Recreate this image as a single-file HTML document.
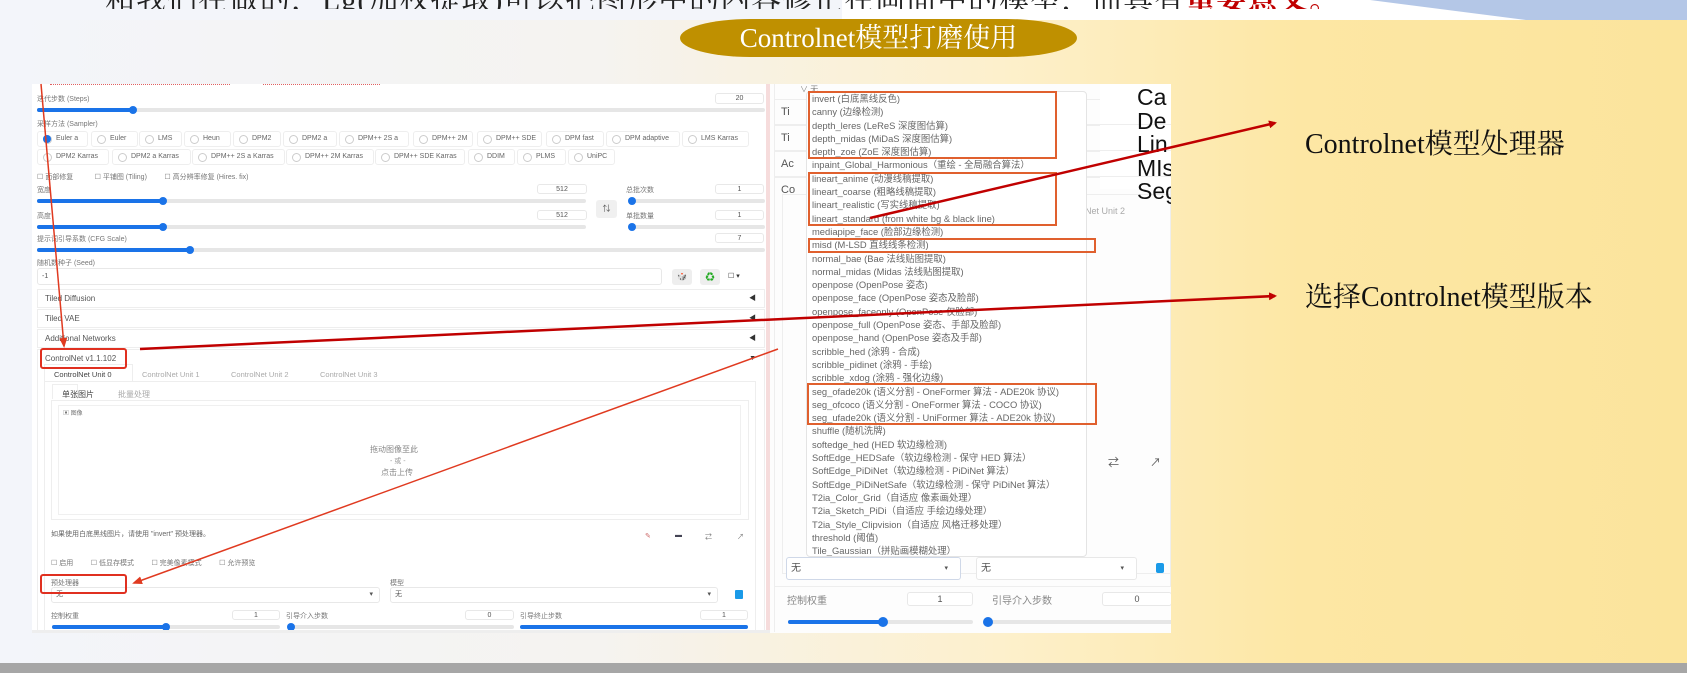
<!DOCTYPE html>
<html><head><meta charset="utf-8"><style>
*{margin:0;padding:0;box-sizing:border-box}
body{width:1687px;height:673px;overflow:hidden;position:relative;font-family:"Liberation Sans","Noto Sans CJK SC",sans-serif;background:linear-gradient(90deg,#f3f5fa 0px,#f5f3f0 600px,#fdf0cc 1000px,#fde7a4 1300px,#fbe49c 1687px)}
.a{position:absolute}
.t{position:absolute;font-size:7px;color:#777;white-space:nowrap}
.inp{position:absolute;border:1px solid #e8e8e8;border-radius:3px;background:#fff;font-size:7px;color:#555;text-align:center;line-height:9px}
.trk{position:absolute;height:4px;background:#e6e6e6;border-radius:2px}
.fill{position:absolute;height:4px;background:#1a73e8;border-radius:2px}
.th{position:absolute;width:8px;height:8px;border-radius:50%;background:#1a73e8}
.rad{position:absolute;height:16px;border:1px solid #eee;border-radius:3px;font-size:7px;color:#666;line-height:14px;padding-left:18px;background:#fff}
.rad:before{content:"";position:absolute;left:5px;top:3px;width:7px;height:7px;border:1px solid #ccc;border-radius:50%}
.acc{position:absolute;left:37px;width:728px;height:19px;border:1px solid #eee;background:#fff;font-size:8px;color:#555;line-height:18px;padding-left:7px}
.acc span{position:absolute;right:8px;font-size:7px;color:#333}
.dd div{height:13.3px;line-height:13.3px;font-size:9.4px;color:#666;padding-left:5px;white-space:nowrap}
.rb{position:absolute;border:2.5px solid #e0602e}
</style></head><body>
<!-- top band -->
<div class="a" style="left:0;top:0;width:1687px;height:20px;background:#fff"></div>
<div class="a" style="left:0;top:0;width:842px;height:20px;background:#f3f5fa"></div>
<svg class="a" style="left:0;top:0" width="1687" height="22"><polygon points="1370,0 1687,0 1687,20 1526,20" fill="#b4c7e7"/></svg>
<div class="a" style="left:0;top:0;width:1687px;height:9px;overflow:hidden">
<div class="a" style="left:105px;top:-25px;font-size:30px;color:#222;white-space:nowrap;font-family:'Liberation Serif','Noto Serif CJK SC',serif;letter-spacing:1px">和我们在做的，Lg(加权提取)可以把图形中的内容修正在画面中的模型，而具有<span style="color:#c00000;font-weight:bold">重要意义。</span></div>
</div>
<!-- title pill -->
<div class="a" style="left:680px;top:19px;width:397px;height:38px;border-radius:70px/19px;background:#bf9000;color:#fff;font-family:'Liberation Serif','Noto Serif CJK SC',serif;font-size:27px;text-align:center;line-height:38px">Controlnet模型打磨使用</div>
<!-- bottom band -->
<div class="a" style="left:0;top:663px;width:1687px;height:10px;background:#a6a6a6"></div>

<!-- left screenshot -->
<div class="a" style="left:32px;top:84px;width:738px;height:549px;background:#fff;overflow:hidden"></div>
<div class="a" style="left:766px;top:84px;width:4px;height:549px;background:#f6dcdc"></div>
<div class="a" style="left:50px;top:84px;width:180px;border-top:1px dotted #e06060"></div>
<div class="a" style="left:263px;top:84px;width:117px;border-top:1px dotted #e06060"></div>
<div class="t" style="left:37px;top:94px">迭代步数 (Steps)</div>
<div class="inp" style="left:715px;top:93px;width:49px;height:11px">20</div>
<div class="trk" style="left:37px;top:108px;width:728px"></div><div class="fill" style="left:37px;top:108px;width:96px"></div><div class="th" style="left:129px;top:106px"></div>
<div class="t" style="left:37px;top:119px">采样方法 (Sampler)</div>
<div class="rad" style="left:37px;top:131px;width:51px">Euler a</div>
<div class="a" style="left:43px;top:135px;width:8px;height:8px;border-radius:50%;background:#1a73e8"></div>
<div class="rad" style="left:91px;top:131px;width:47px">Euler</div>
<div class="rad" style="left:139px;top:131px;width:43px">LMS</div>
<div class="rad" style="left:184px;top:131px;width:47px">Heun</div>
<div class="rad" style="left:233px;top:131px;width:48px">DPM2</div>
<div class="rad" style="left:283px;top:131px;width:54px">DPM2 a</div>
<div class="rad" style="left:339px;top:131px;width:70px">DPM++ 2S a</div>
<div class="rad" style="left:413px;top:131px;width:60px">DPM++ 2M</div>
<div class="rad" style="left:477px;top:131px;width:65px">DPM++ SDE</div>
<div class="rad" style="left:546px;top:131px;width:58px">DPM fast</div>
<div class="rad" style="left:606px;top:131px;width:74px">DPM adaptive</div>
<div class="rad" style="left:682px;top:131px;width:67px">LMS Karras</div>
<div class="rad" style="left:37px;top:149px;width:72px">DPM2 Karras</div>
<div class="rad" style="left:112px;top:149px;width:79px">DPM2 a Karras</div>
<div class="rad" style="left:192px;top:149px;width:93px">DPM++ 2S a Karras</div>
<div class="rad" style="left:286px;top:149px;width:88px">DPM++ 2M Karras</div>
<div class="rad" style="left:375px;top:149px;width:90px">DPM++ SDE Karras</div>
<div class="rad" style="left:468px;top:149px;width:47px">DDIM</div>
<div class="rad" style="left:517px;top:149px;width:49px">PLMS</div>
<div class="rad" style="left:568px;top:149px;width:47px">UniPC</div>
<div class="t" style="left:37px;top:172px">☐ 面部修复 &nbsp; &nbsp; &nbsp; &nbsp; &nbsp; ☐ 平铺图 (Tiling) &nbsp; &nbsp; &nbsp; &nbsp; ☐ 高分辨率修复 (Hires. fix)</div>
<div class="t" style="left:37px;top:185px">宽度</div>
<div class="inp" style="left:537px;top:184px;width:50px;height:10px">512</div>
<div class="trk" style="left:37px;top:199px;width:549px"></div><div class="fill" style="left:37px;top:199px;width:126px"></div><div class="th" style="left:159px;top:197px"></div>
<div class="t" style="left:37px;top:211px">高度</div>
<div class="inp" style="left:537px;top:210px;width:50px;height:10px">512</div>
<div class="trk" style="left:37px;top:225px;width:549px"></div><div class="fill" style="left:37px;top:225px;width:126px"></div><div class="th" style="left:159px;top:223px"></div>
<div class="a" style="left:596px;top:200px;width:21px;height:18px;background:#f0f0f0;border-radius:3px;font-size:8px;text-align:center;line-height:18px;color:#555">⇅</div>
<div class="t" style="left:626px;top:185px">总批次数</div><div class="inp" style="left:715px;top:184px;width:49px;height:10px">1</div>
<div class="trk" style="left:631px;top:199px;width:134px"></div><div class="th" style="left:628px;top:197px"></div>
<div class="t" style="left:626px;top:211px">单批数量</div><div class="inp" style="left:715px;top:210px;width:49px;height:10px">1</div>
<div class="trk" style="left:631px;top:225px;width:134px"></div><div class="th" style="left:628px;top:223px"></div>
<div class="t" style="left:37px;top:234px">提示词引导系数 (CFG Scale)</div><div class="inp" style="left:715px;top:233px;width:49px;height:10px">7</div>
<div class="trk" style="left:37px;top:248px;width:728px"></div><div class="fill" style="left:37px;top:248px;width:153px"></div><div class="th" style="left:186px;top:246px"></div>
<div class="t" style="left:37px;top:258px">随机数种子 (Seed)</div>
<div class="inp" style="left:37px;top:268px;width:625px;height:17px;text-align:left;padding-left:4px;line-height:15px">-1</div>
<div class="a" style="left:672px;top:269px;width:20px;height:16px;background:#eee;border-radius:3px;font-size:8px;text-align:center;line-height:16px">🎲</div>
<div class="a" style="left:700px;top:269px;width:20px;height:16px;background:#eee;border-radius:3px;font-size:9px;color:#2a2;text-align:center;line-height:16px">♻</div>
<div class="t" style="left:728px;top:272px;color:#333">☐ ▾</div>
<div class="acc" style="top:289px">Tiled Diffusion<span>◀</span></div>
<div class="acc" style="top:309px">Tiled VAE<span>◀</span></div>
<div class="acc" style="top:329px">Additional Networks<span>◀</span></div>
<div class="acc" style="top:349px;height:281px;border-bottom:none">ControlNet v1.1.102<span>▼</span></div>
<div class="a" style="left:44px;top:364px;width:89px;height:18px;border:1px solid #eee;border-bottom:none;background:#fff"></div>
<div class="t" style="left:54px;top:370px;color:#444;font-size:7.5px">ControlNet Unit 0</div>
<div class="t" style="left:142px;top:370px;color:#aaa;font-size:7.5px">ControlNet Unit 1</div>
<div class="t" style="left:231px;top:370px;color:#aaa;font-size:7.5px">ControlNet Unit 2</div>
<div class="t" style="left:320px;top:370px;color:#aaa;font-size:7.5px">ControlNet Unit 3</div>
<div class="a" style="left:44px;top:381px;width:712px;height:249px;border:1px solid #eee;border-bottom:none"></div>
<div class="a" style="left:52px;top:384px;width:26px;height:15px;border:1px solid #eee;border-bottom:none"></div>
<div class="t" style="left:62px;top:389px;color:#444;font-size:8px">单张图片</div>
<div class="t" style="left:118px;top:389px;color:#aaa;font-size:8px">批量处理</div>
<div class="a" style="left:51px;top:400px;width:698px;height:120px;border:1px solid #eee"></div>
<div class="a" style="left:58px;top:405px;width:683px;height:110px;border:1px solid #f0f0f0"></div>
<div class="t" style="left:63px;top:408px;font-size:6px">▣ 图像</div>
<div class="t" style="left:370px;top:444px;font-size:8px;color:#888">拖动图像至此</div>
<div class="t" style="left:390px;top:456px;font-size:7px;color:#999">- 或 -</div>
<div class="t" style="left:381px;top:467px;font-size:8px;color:#888">点击上传</div>
<div class="t" style="left:51px;top:529px;color:#666">如果使用白底黑线图片，请使用 "invert" 预处理器。</div>
<div class="t" style="left:645px;top:532px;color:#c66">✎</div><div class="t" style="left:675px;top:532px;color:#445">▬</div><div class="t" style="left:705px;top:532px">⇄</div><div class="t" style="left:737px;top:532px">↗</div>
<div class="t" style="left:51px;top:558px">☐ 启用 &nbsp; &nbsp; &nbsp; &nbsp; ☐ 低显存模式 &nbsp; &nbsp; &nbsp; &nbsp; ☐ 完美像素模式 &nbsp; &nbsp; &nbsp; &nbsp; ☐ 允许预览</div>
<div class="t" style="left:51px;top:578px">预处理器</div><div class="t" style="left:390px;top:578px">模型</div>
<div class="inp" style="left:51px;top:587px;width:329px;height:16px;text-align:left;padding-left:4px;line-height:14px">无<span style="float:right;margin-right:6px">▾</span></div>
<div class="inp" style="left:390px;top:587px;width:328px;height:16px;text-align:left;padding-left:4px;line-height:14px">无<span style="float:right;margin-right:6px">▾</span></div>
<div class="a" style="left:735px;top:590px;width:8px;height:9px;background:#1a9ae8;border-radius:1px"></div>
<div class="t" style="left:51px;top:611px">控制权重</div><div class="inp" style="left:232px;top:610px;width:48px;height:10px">1</div>
<div class="t" style="left:286px;top:611px">引导介入步数</div><div class="inp" style="left:465px;top:610px;width:49px;height:10px">0</div>
<div class="t" style="left:520px;top:611px">引导终止步数</div><div class="inp" style="left:700px;top:610px;width:48px;height:10px">1</div>
<div class="trk" style="left:52px;top:625px;width:228px"></div><div class="fill" style="left:52px;top:625px;width:114px"></div><div class="th" style="left:162px;top:623px"></div>
<div class="trk" style="left:290px;top:625px;width:224px"></div><div class="th" style="left:287px;top:623px"></div>
<div class="fill" style="left:520px;top:625px;width:228px"></div>
<div class="a" style="left:32px;top:630px;width:1139px;height:3px;background:#eee"></div>

<!-- right screenshot -->
<div class="a" style="left:770px;top:84px;width:401px;height:549px;background:#fdfdfd;overflow:hidden">
  <div class="a" style="left:4px;top:0;width:400px;height:548px;border-left:1px solid #eee"></div>
  <div class="a" style="left:4px;top:15px;width:397px;height:26px;border:1px solid #eee;font-size:11px;color:#555;padding:6px 0 0 6px">Ti</div>
  <div class="a" style="left:4px;top:41px;width:397px;height:26px;border:1px solid #eee;font-size:11px;color:#555;padding:6px 0 0 6px">Ti</div>
  <div class="a" style="left:4px;top:67px;width:397px;height:26px;border:1px solid #eee;font-size:11px;color:#555;padding:6px 0 0 6px">Ac</div>
  <div class="a" style="left:4px;top:93px;width:397px;height:410px;border:1px solid #eee;font-size:11px;color:#555;padding:6px 0 0 6px">Co</div>
  <div class="a" style="left:12px;top:110px;width:390px;height:380px;border:1px solid #eee"></div>
  <div class="a" style="left:330px;top:0;width:71px;height:105px;background:#fff"></div>
  <div class="a" style="left:330px;top:15px;width:71px;height:26px;border-bottom:1px solid #eee"></div>
  <div class="a" style="left:330px;top:41px;width:71px;height:26px;border-bottom:1px solid #eee"></div>
  <div class="a" style="left:330px;top:67px;width:71px;height:26px;border-bottom:1px solid #eee"></div>
  <div class="a" style="left:367px;top:2px;font-size:23px;line-height:23.6px;color:#111;font-family:'Liberation Sans',sans-serif">Ca<br>De<br>Lin<br>MIs<br>Seg</div>
  <div class="t" style="left:315px;top:122px;font-size:9px;color:#aaa">Net Unit 2</div>
  <div class="t" style="left:338px;top:370px;font-size:11px;color:#555">⇄</div>
  <div class="t" style="left:380px;top:370px;font-size:11px;color:#555">↗</div>
  <div class="inp" style="left:16px;top:473px;width:175px;height:23px;text-align:left;padding-left:4px;line-height:21px;font-size:10px;border-color:#cfd8e8">无<span style="float:right;margin-right:12px;font-size:7px">▾</span></div>
  <div class="inp" style="left:206px;top:473px;width:161px;height:23px;text-align:left;padding-left:4px;line-height:21px;font-size:10px">无<span style="float:right;margin-right:12px;font-size:7px">▾</span></div>
  <div class="a" style="left:386px;top:479px;width:8px;height:10px;background:#1a9ae8;border-radius:2px"></div>
  <div class="t" style="left:17px;top:508px;font-size:10px;color:#888">控制权重</div>
  <div class="inp" style="left:137px;top:508px;width:66px;height:14px;font-size:9px;line-height:12px">1</div>
  <div class="t" style="left:222px;top:508px;font-size:10px;color:#888">引导介入步数</div>
  <div class="inp" style="left:332px;top:508px;width:70px;height:14px;font-size:9px;line-height:12px">0</div>
  <div class="trk" style="left:18px;top:536px;width:185px"></div><div class="fill" style="left:18px;top:536px;width:95px"></div><div class="th" style="left:108px;top:533px;width:10px;height:10px"></div>
  <div class="trk" style="left:218px;top:536px;width:190px"></div><div class="th" style="left:213px;top:533px;width:10px;height:10px"></div>
</div>

<!-- dropdown -->
<div class="a dd" style="left:806px;top:91px;width:281px;height:466px;background:#fff;border:1px solid #e4e4e4;border-radius:4px;overflow:hidden">
<div>invert (白底黑线反色)</div><div>canny (边缘检测)</div><div>depth_leres (LeReS 深度图估算)</div><div>depth_midas (MiDaS 深度图估算)</div><div>depth_zoe (ZoE 深度图估算)</div><div>inpaint_Global_Harmonious（重绘 - 全局融合算法）</div><div>lineart_anime (动漫线稿提取)</div><div>lineart_coarse (粗略线稿提取)</div><div>lineart_realistic (写实线稿提取)</div><div>lineart_standard (from white bg &amp; black line)</div><div>mediapipe_face (脸部边缘检测)</div><div>misd (M-LSD 直线线条检测)</div><div>normal_bae (Bae 法线贴图提取)</div><div>normal_midas (Midas 法线贴图提取)</div><div>openpose (OpenPose 姿态)</div><div>openpose_face (OpenPose 姿态及脸部)</div><div>openpose_faceonly (OpenPose 仅脸部)</div><div>openpose_full (OpenPose 姿态、手部及脸部)</div><div>openpose_hand (OpenPose 姿态及手部)</div><div>scribble_hed (涂鸦 - 合成)</div><div>scribble_pidinet (涂鸦 - 手绘)</div><div>scribble_xdog (涂鸦 - 强化边缘)</div><div>seg_ofade20k (语义分割 - OneFormer 算法 - ADE20k 协议)</div><div>seg_ofcoco (语义分割 - OneFormer 算法 - COCO 协议)</div><div>seg_ufade20k (语义分割 - UniFormer 算法 - ADE20k 协议)</div><div>shuffle (随机洗牌)</div><div>softedge_hed (HED 软边缘检测)</div><div>SoftEdge_HEDSafe（软边缘检测 - 保守 HED 算法）</div><div>SoftEdge_PiDiNet（软边缘检测 - PiDiNet 算法）</div><div>SoftEdge_PiDiNetSafe（软边缘检测 - 保守 PiDiNet 算法）</div><div>T2ia_Color_Grid（自适应 像素画处理）</div><div>T2ia_Sketch_PiDi（自适应 手绘边缘处理）</div><div>T2ia_Style_Clipvision（自适应 风格迁移处理）</div><div>threshold (阈值)</div><div>Tile_Gaussian（拼贴画模糊处理）</div>
</div>
<div class="t" style="left:800px;top:84px;font-size:8px;color:#888">∨ 无</div>
<div class="rb" style="left:808px;top:91px;width:249px;height:68px"></div>
<div class="rb" style="left:808px;top:172px;width:249px;height:54px"></div>
<div class="rb" style="left:808px;top:238px;width:288px;height:15px"></div>
<div class="rb" style="left:807px;top:383px;width:290px;height:42px"></div>
<div class="a" style="left:40px;top:348px;width:87px;height:21px;border:2px solid #e03020;border-radius:3px"></div>
<div class="a" style="left:40px;top:574px;width:87px;height:20px;border:2px solid #e03020;border-radius:3px"></div>

<!-- labels -->
<div class="a" style="left:1305px;top:122px;font-family:'Liberation Serif','Noto Serif CJK SC',serif;font-size:28px;color:#111;white-space:nowrap">Controlnet模型处理器</div>
<div class="a" style="left:1305px;top:275px;font-family:'Liberation Serif','Noto Serif CJK SC',serif;font-size:28px;color:#111;white-space:nowrap">选择Controlnet模型版本</div>

<!-- arrows -->
<svg class="a" style="left:0;top:0" width="1687" height="673">
<defs>
<marker id="m1" markerWidth="8" markerHeight="8" refX="6" refY="4" orient="auto" markerUnits="userSpaceOnUse"><path d="M0,0 L8,4 L0,8 z" fill="#c00000"/></marker>
<marker id="m2" markerWidth="10" markerHeight="8" refX="8" refY="4" orient="auto" markerUnits="userSpaceOnUse"><path d="M0,0 L10,4 L0,8 z" fill="#e03a20"/></marker>
</defs>
<line x1="41" y1="84" x2="64" y2="346" stroke="#e03a20" stroke-width="1.5" marker-end="url(#m2)"/>
<line x1="870" y1="218" x2="1275" y2="123" stroke="#c00000" stroke-width="2.5" marker-end="url(#m1)"/>
<line x1="140" y1="349" x2="1275" y2="296" stroke="#c00000" stroke-width="2.5" marker-end="url(#m1)"/>
<line x1="778" y1="349" x2="134" y2="583" stroke="#e03a20" stroke-width="1.5" marker-end="url(#m2)"/>
</svg>
</body></html>
